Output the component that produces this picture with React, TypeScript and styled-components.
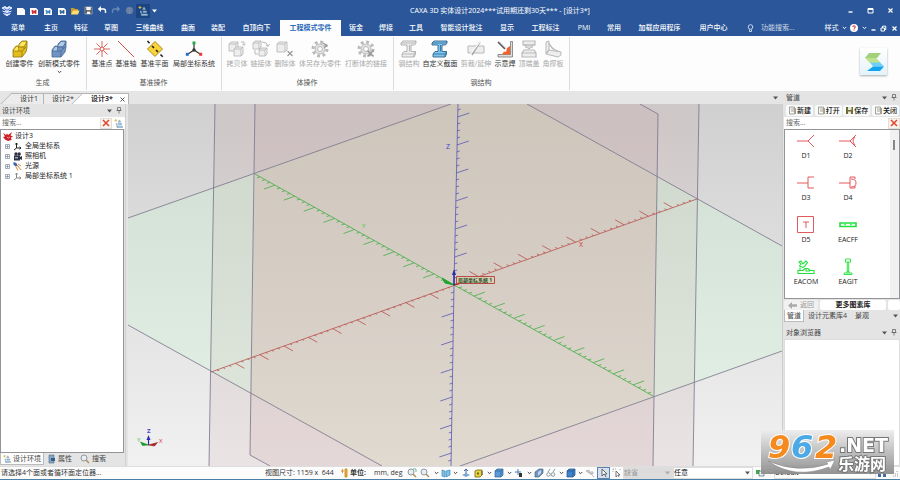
import React from "react";
import styled, { createGlobalStyle, css } from "styled-components";

const Global = createGlobalStyle`
  * { box-sizing: border-box; }
  body {
    margin: 0;
    font-family: "Open Sans", "Noto Sans CJK SC", sans-serif;
    font-size: 7px;
    line-height: 10px;
    color: #333;
    background: #e4e4e4;
  }
  button, input, select {
    font: inherit;
    color: inherit;
    margin: 0;
    padding: 0;
    border: 0;
    background: none;
    border-radius: 0;
    outline: 0;
  }
  svg { display: block; flex: none; }
  h1, h2, p { margin: 0; font-size: inherit; font-weight: inherit; }
`;

const Shell = styled.div`
  display: flex;
  flex-direction: column;
  min-height: 100vh;
  border-bottom: 1px solid #4c7fa6;
  white-space: nowrap;
  overflow: hidden;
`;

/* ---------- title bar and menu ---------- */
const Header = styled.header`
  background: #2b579a;
  color: #fff;
`;
const TitleBar = styled.div`
  display: flex;
  align-items: center;
  height: 20px;
`;
const QuickAccess = styled.div`
  display: flex;
  align-items: center;
  width: 160px;
  padding-top: 1px;
`;
const QuickList = styled.div`
  display: grid;
  grid-template-columns: repeat(10, 1fr);
  width: 136px;
`;
const QuickButton = styled.button<{ $on?: boolean }>`
  display: grid;
  place-items: center;
  height: 14px;
  ${(p) => p.$on && css`background: #1b4480;`}
`;
const BareButton = styled.button<{ $w?: number }>`
  display: grid;
  place-items: center;
  width: ${(p) => p.$w ?? 10}px;
  height: 12px;
`;
const Title = styled.h1`
  flex: 1;
  padding-top: 1px;
  font-family: "Noto Sans", "Noto Sans CJK SC", sans-serif;
  text-align: center;
`;
const MenuBar = styled.nav`
  display: flex;
  align-items: center;
  height: 16px;
`;
const MenuItem = styled.button<{ $w: number; $active?: boolean }>`
  width: ${(p) => p.$w}px;
  height: 16px;
  padding-bottom: 1px;
  font-weight: 500;
  ${(p) => p.$active && css`
    background: #fdfdfd;
    color: #2b69b8;
    font-weight: 700;
  `}
`;
const FunctionSearch = styled.label`
  display: flex;
  align-items: center;
  gap: 7px;
  flex: 1;
  padding-left: 10px;
`;
const SearchInput = styled.input`
  flex: 1;
  min-width: 0;
  width: 40px;
  height: 10px;
  &::placeholder { color: inherit; opacity: 0.75; }
`;

/* ---------- ribbon ---------- */
const Ribbon = styled.section`
  display: flex;
  height: 55px;
  background: #fdfdfd;
`;
const Group = styled.section`
  display: flex;
  flex-direction: column;
  justify-content: space-between;
  margin: 1px 0;
  padding: 0 4px 2px 3px;
  border-right: 1px solid #dcdcdc;
`;
const GroupButtons = styled.div`
  display: flex;
`;
const GroupTitle = styled.h2`
  text-align: center;
  color: #555;
`;
const Tool = styled.button<{ $w: number; $off?: boolean }>`
  display: flex;
  flex-direction: column;
  align-items: center;
  justify-content: flex-start;
  gap: 1px;
  width: ${(p) => p.$w}px;
  padding-top: 3px;
  color: ${(p) => (p.$off ? "#a8a8a8" : "#333")};
  white-space: nowrap;
`;
const Brand = styled.div`
  display: grid;
  place-items: center;
  width: 27px;
  height: 27px;
  margin: 12px 13px 0 auto;
  background: linear-gradient(#fff, #e3f3fa);
  box-shadow: 0 1px 2px #aaa;
`;

/* ---------- work area ---------- */
const Work = styled.div`
  display: grid;
  grid-template-columns: 1fr 117px;
  flex: 1;
`;
const Center = styled.div`
  display: flex;
  flex-direction: column;
`;
const DocTabs = styled.div`
  display: flex;
  align-items: flex-end;
  height: 13px;
  padding: 0 4px 0 12px;
  background: #e5e5e5;
`;
const DocTab = styled.button<{ $w: number; $active?: boolean; $slant?: boolean }>`
  position: relative;
  width: ${(p) => p.$w}px;
  height: 11px;
  padding-left: 8px;
  text-align: left;
  border-top: 1px solid #b5b5b5;
  border-right: 1px solid #b5b5b5;
  background: ${(p) => (p.$active ? "#fff" : "#ececec")};
  font-weight: ${(p) => (p.$active ? 700 : 400)};
  ${(p) => p.$slant && css`
    &::before {
      content: "";
      position: absolute;
      top: -1px;
      bottom: 0;
      left: -6px;
      width: 12px;
      border-left: 1px solid #b5b5b5;
      border-top: 1px solid #b5b5b5;
      background: inherit;
      transform: skewX(-45deg);
    }
  `}
`;
const TabText = styled.span`
  position: relative;
  display: flex;
  align-items: center;
  justify-content: space-between;
  padding-right: 3px;
`;
const Push = styled.span`
  flex: 1;
`;
const Body = styled.div`
  display: flex;
  flex: 1;
`;
const SidePanel = styled.aside`
  display: flex;
  flex-direction: column;
  width: 125px;
`;
const PanelHead = styled.div<{ $gap?: boolean }>`
  display: flex;
  align-items: center;
  height: 13px;
  margin-top: ${(p) => (p.$gap ? 3 : 0)}px;
  padding: 0 1px 0 2px;
  color: #444;
`;
const PanelTitle = styled.h2`
  flex: 1;
`;
const SearchRow = styled.label`
  display: flex;
  align-items: center;
  height: 12px;
  padding-left: 2px;
  background: #fff;
`;
const ClearButton = styled.button`
  display: grid;
  place-items: center;
  width: 12px;
  height: 11px;
  border: 1px solid #e3ded8;
  background: #fbf3ee;
`;
const TreeBox = styled.div`
  flex: 1;
  margin-right: 1px;
  padding: 1px 0 0 2px;
  border: 1px solid #929497;
  background: #fff;
`;
const TreeRow = styled.div<{ $root?: boolean }>`
  display: flex;
  align-items: center;
  gap: ${(p) => (p.$root ? 2 : 3)}px;
  height: 10px;
  padding-left: ${(p) => (p.$root ? 0 : 2)}px;
  color: #222;
`;
const Expander = styled.button`
  display: grid;
  place-items: center;
  width: 5px;
  height: 10px;
`;
const PanelTabs = styled.div`
  display: flex;
  height: 13px;
`;
const PanelTab = styled.button<{ $active?: boolean }>`
  display: flex;
  align-items: center;
  gap: 2px;
  height: 12px;
  padding: 0 4px;
  color: #444;
  ${(p) => p.$active && css`
    padding: 0 2px;
    background: #fdfdfd;
    border: 1px solid #bbb;
    border-top: 0;
  `}
`;
const Splitter = styled.div`
  width: 3px;
  background: #e4e4e4;
  border-left: 1px solid #cfcfcf;
`;
const Viewport = styled.div`
  flex: 1;
  min-width: 0;
  position: relative;
  border-right: 1px solid #ccc;
  background: linear-gradient(#d0d0d0, #f1f1f1);
`;
const Scene = styled.svg`
  position: absolute;
  inset: 0;
  width: 100%;
  height: 100%;
`;

/* ---------- right panel ---------- */
const RightPanel = styled.aside`
  display: flex;
  flex-direction: column;
  padding-left: 1px;
  background: #e4e4e4;
`;
const ActionRow = styled.div`
  display: flex;
  justify-content: space-between;
  height: 13px;
  padding: 1px 1px 1px 2px;
`;
const Action = styled.button`
  display: flex;
  align-items: center;
  justify-content: center;
  width: 27px;
  background: #fafafa;
  border-radius: 2px;
  color: #111;
  font-weight: 500;
`;
const Library = styled.div`
  display: flex;
  height: 170px;
  border: 1px solid #929497;
  background: #fff;
`;
const LibraryGrid = styled.div`
  display: grid;
  grid-template-columns: 42px 42px;
  grid-auto-rows: 42px;
  flex: 1;
`;
const Part = styled.button`
  display: flex;
  flex-direction: column;
  align-items: center;
  padding-top: 1px;
  color: #222;
`;
const ScrollTrack = styled.div`
  width: 9px;
  padding: 10px 0 0 3px;
  background: #f1f1f1;
`;
const ScrollThumb = styled.div`
  width: 2px;
  height: 10px;
  background: #888;
`;
const BackRow = styled.div`
  display: grid;
  grid-template-columns: 34px 1fr 12px;
  gap: 2px;
  height: 11px;
  padding-top: 1px;
`;
const FlatButton = styled.button<{ $off?: boolean }>`
  display: flex;
  align-items: center;
  justify-content: center;
  gap: 3px;
  background: ${(p) => (p.$off ? "#f1f1f1" : "#fff")};
  color: ${(p) => (p.$off ? "#999" : "#222")};
  font-weight: ${(p) => (p.$off ? 400 : 700)};
  border-radius: 2px;
`;
const Browser = styled.div`
  flex: 1;
  border: 1px solid #ddd;
  background: #fff;
`;

/* ---------- status bar ---------- */
const StatusBar = styled.footer`
  display: flex;
  align-items: center;
  height: 13px;
  background: #fcfcfc;
  border-top: 1px solid #ddd;
`;
const StatusText = styled.span<{ $w?: number; $strong?: boolean }>`
  ${(p) => (p.$w ? css`width: ${p.$w}px;` : css`flex: 1; padding-left: 1px;`)}
  font-weight: ${(p) => (p.$strong ? 700 : 400)};
`;
const StatusButton = styled.button<{ $w: number; $on?: boolean }>`
  display: grid;
  place-items: center;
  width: ${(p) => p.$w}px;
  height: 12px;
  ${(p) => p.$on && css`
    background: #d6e0ee;
    border: 1px solid #5b7fae;
  `}
`;
const SelectWrap = styled.label<{ $w: number; $off?: boolean }>`
  display: flex;
  align-items: center;
  width: ${(p) => p.$w}px;
  height: 12px;
  padding-right: 2px;
  background: ${(p) => (p.$off ? "#dcdcdc" : "#fff")};
  color: ${(p) => (p.$off ? "#999" : "#111")};
  border: 1px solid #ddd;
`;
const Select = styled.select`
  flex: 1;
  min-width: 0;
  height: 10px;
  appearance: none;
  opacity: 1;
`;

/* ---------- overlay badge ---------- */
const Watermark = styled.div`
  position: fixed;
  right: 6px;
  bottom: 6px;
  width: 133px;
  height: 44px;
  background: linear-gradient(rgba(236, 236, 236, 0.9), rgba(140, 140, 140, 0.95));
`;
const BadgeArt = styled.svg`
  overflow: visible;
`;

/* ---------- drawings ---------- */
const Chevron = ({ c = "#444" }: { c?: string }) => (
  <svg width="5" height="4" viewBox="0 0 5 4"><path d="M.8 1l1.700 1.700L4.200 1" fill="none" stroke={c} /></svg>
);
const Caret = ({ c = "#555" }: { c?: string }) => (
  <svg width="5" height="4" viewBox="0 0 5 4"><path d="M0 .5h5L2.500 3.500z" fill={c} /></svg>
);
const Pin = () => (
  <svg width="6" height="7" viewBox="0 0 6 7"><path d="M1.500.5h3v3h-3zM.5 3.500h5M3 3.500v3" fill="none" stroke="#666" strokeWidth=".8" /></svg>
);
const RedX = () => (
  <svg width="8" height="8" viewBox="0 0 8 8"><path d="M1 1l6 6M7 1L1 7" stroke="#e0452b" strokeWidth="1.500" /></svg>
);
const WinIcon = ({ k }: { k: "min" | "max" | "close" | "restore" }) => (
  <svg width="7" height="7" viewBox="0 0 7 7" fill="none" stroke="#fff">
    {k === "min" && <path d="M1.500 5h4" strokeWidth="1.400" />}
    {k === "max" && <path d="M1 1.500h5v4.500H1zM1 2.500h5" />}
    {k === "close" && <path d="M1.500 1.500l4 4m0-4l-4 4" strokeWidth="1.200" />}
    {k === "restore" && <path d="M1 3h3.500v3H1zM2.500 3V1.200h3.300v3.300H4.500" />}
  </svg>
);
const Sheet = ({ c }: { c?: string }) => (
  <svg width="10" height="10" viewBox="0 0 10 10">
    <path d="M1 2h6l2 2v5H1z" fill="#fff" />
    {c && <path d="M3 4l2 1.500L7 4v3.500L5 6.500 3.500 8z" fill={c} stroke={c} strokeWidth=".8" />}
  </svg>
);
const DocTree = ({ s = 10 }: { s?: number }) => (
  <svg width={s} height={s} viewBox="0 0 10 10">
    <path d="M2 0v3M.5 1.500h3" stroke="#e9b33f" strokeWidth="1" />
    <path d="M6 1l1.500 2.500h-3zM5 5h3.500v1.500H5zM3.500 8h6v1.500h-6zM2 5h1.500v4.500" fill="#a9cbe0" stroke="#7299b4" strokeWidth=".6" />
  </svg>
);
const quickIcons: [string, React.ReactNode][] = [
  ["新建", <Sheet />],
  ["新建设计", <Sheet c="#d3222a" />],
  ["新建图纸", <Sheet c="#3c87c4" />],
  ["新建模板", <Sheet c="#2a6590" />],
  ["打开", <svg width="10" height="10" viewBox="0 0 10 10"><path d="M1 8.500V2h3l1 1h3v2" fill="#c89b2d" /><path d="M1 8.500L3 4.500h6.500L8 8.500z" fill="#ffdd6e" /></svg>],
  ["保存", <svg width="9" height="9" viewBox="0 0 9 9"><path d="M1 1h7v7H1z" fill="#3f4042" stroke="#c9c9c9" strokeWidth=".6" /><path d="M2.200 1h4.600v3.200H2.200zM2.800 5.500h3.500V8H2.800z" fill="#f3f3f3" /></svg>],
  ["撤销", <svg width="10" height="9" viewBox="0 0 10 9"><path d="M4 0L.8 3 4 6z" fill="#fff" /><path d="M3 3h3.500q2 0 2 2.200V7" fill="none" stroke="#fff" strokeWidth="1.500" /></svg>],
  ["重做", <svg width="10" height="9" viewBox="0 0 10 9"><path d="M6 0l3.200 3L6 6z" fill="#6688b8" /><path d="M7 3H3.500q-2 0-2 2.200V7" fill="none" stroke="#6688b8" strokeWidth="1.300" /></svg>],
  ["网络", <svg width="9" height="9" viewBox="0 0 9 9"><circle cx="4.500" cy="4.500" r="3.700" fill="#60789f" /><path d="M1 4.500h7M4.500 1v7M2 2.500h5M2 6.500h5" stroke="#8596b0" strokeWidth=".5" /></svg>],
  ["设计树", <DocTree />],
];
const AppMark = () => (
  <svg width="12" height="12" viewBox="0 0 12 12">
    <path d="M1 3l3-1.500L6 3l2-1.500L11 3 6 6zM1.500 6L6 8.500 10.500 6M2.500 8.500L6 10.700l3.500-2.200" fill="#d6e5fb" stroke="#e9f1ff" strokeWidth="1" />
    <path d="M3 3.500l3 1.700 3-1.700M3 7l3 1.700L9 7" fill="none" stroke="#5479dc" />
  </svg>
);

const gray = "#b9b9b9";
const Svg20 = ({ children }: { children: React.ReactNode }) => (
  <svg width="18" height="18" viewBox="0 0 18 18" fill="none">{children}</svg>
);
const Block = ({ a, b, d }: { a: string; b: string; d: string }) => (
  <Svg20>
    <path d="M2 10l3-4h3V4l3-3h5v6l-1 5-4 5H2z" fill={a} stroke={d} strokeWidth=".8" />
    <path d="M2 11h9l4-4M7 7h6l3-5M11 11v6M7 7v4M13 7v2" stroke={d} strokeWidth=".7" />
    <path d="M3 10.500L5.500 7H7v3.500zM8 6l3-4h4l-2 4z" fill={b} />
  </Svg20>
);
const Cube = ({ x, y, s = 7 }: { x: number; y: number; s?: number }) => (
  <g transform={`translate(${x} ${y})`} stroke={gray} strokeWidth=".9" fill="#eee">
    <path d={`M0 2h${s}v${s}h-${s}zM0 2l2-2h${s}l-2 2M${s} ${s + 2}l2-2V0`} />
  </g>
);
const Gear = ({ children }: { children?: React.ReactNode }) => (
  <Svg20>
    <circle cx="9" cy="9" r="7" stroke={gray} strokeWidth="3" strokeDasharray="2.750 2.750" />
    <circle cx="9" cy="9" r="5" fill="#e4e4e4" stroke={gray} />
    <circle cx="9" cy="9" r="2.500" fill="#fdfdfd" stroke={gray} />
    {children}
  </Svg20>
);
const Beam = ({ f, s }: { f: string; s: string }) => (
  <Svg20>
    <path d="M1 3l2-2h13v2l-1.500 2H11v6.500h4.500V14L14 17H2v-3l2-2.500h3V5H1z" fill={f} stroke={s} strokeWidth=".9" />
    <path d="M1 3h13.500L16 1M2 14h12l1.500-2.500M14 14v3M9.500 5v6.500" stroke={s} strokeWidth=".8" />
  </Svg20>
);

type ToolDef = [string, number, React.ReactNode, boolean?];
const groups: { title: string; tools: ToolDef[] }[] = [
  {
    title: "生成",
    tools: [
      ["创建零件", 33, <Block a="#e3bd1c" b="#ffe866" d="#8b7416" />],
      ["创新模式零件", 46, <Block a="#6f93c4" b="#b3cdec" d="#49658d" />],
    ],
  },
  {
    title: "基准操作",
    tools: [
      ["基准点", 24, <Svg20><path d="M9 1v16M1 9h16M3.500 3.500l11 11m0-11l-11 11" stroke="#d8544c" strokeWidth=".9" /><circle cx="9" cy="9" r="2" stroke="#d8544c" fill="#fff" /></Svg20>],
      ["基准轴", 24, <Svg20><path d="M1 1l16 16" stroke="#d8544c" strokeWidth="1" /></Svg20>],
      ["基准平面", 33, <Svg20><path d="M9 1.500L16.500 9 9 16.500 1.500 9z" fill="#fbd337" stroke="#a78b26" /><path d="M1.500 1l2 2.200M6 6l2 2m2 2l2 2M14.500 14.500l2.200 2.200" stroke="#222" strokeWidth="1.600" /></Svg20>],
      ["局部坐标系统", 46, <Svg20><path d="M9 10V4M9 10l-6 4M9 10l6 4" stroke="#333" strokeWidth="1.200" /><path d="M7.500 1.500h3v3h-3z" fill="#25a846" /><circle cx="9" cy="10" r="1.700" fill="#333" /><path d="M.8 12.800h3v3h-3z" fill="#2a6fd0" /><path d="M14.200 12.800h3v3h-3z" fill="#e23c34" /></Svg20>],
    ],
  },
  {
    title: "体操作",
    tools: [
      ["拷贝体", 24, <Svg20><Cube x={1} y={2} /><Cube x={6} y={7} /><path d="M13 2h3v3m-1.500-1.200L16 5.500l1.500-1.700" stroke={gray} /></Svg20>, true],
      ["链接体", 24, <Svg20><Cube x={1} y={1} s={6} /><Cube x={7} y={8} s={6} /><path d="M3 10v4h3M10 2q5 0 6 4M14 5l2 1.500L17.500 4" stroke={gray} /></Svg20>, true],
      ["删除体", 24, <Svg20><Cube x={1} y={2} s={8} /><path d="M11.500 11l5 5m0-5l-5 5" stroke="#999" strokeWidth="1.300" /></Svg20>, true],
      ["体另存为零件", 46, <Gear><path d="M12 3l4 3-3 1.500" stroke="#999" strokeWidth="1.300" /></Gear>, true],
      ["打断体的链接", 46, <Gear><path d="M10.500 10.500l6 6m0-6l-6 6" stroke="#999" strokeWidth="1.700" /></Gear>, true],
    ],
  },
  {
    title: "钢结构",
    tools: [
      ["钢结构", 24, <Beam f="#eee" s="#aaa" />, true],
      ["自定义截面", 38, <Beam f="#7cc6f2" s="#33658d" />],
      ["剪裁/延伸", 34, <Svg20><path d="M1 6h16v7H1z" fill="#eee" stroke={gray} /><path d="M5 15L13 2" stroke="#aaa" strokeWidth="1.500" /><path d="M2 16l11-14" stroke="#fff" /></Svg20>, true],
      ["示意焊", 24, <Svg20><path d="M14.500 1.500h2v15.500H2v-2.500h12.500z" fill="#ddd" stroke="#777" strokeWidth=".8" /><path d="M14 6v8.500H6l2-3 2 .5 1-4z" fill="#f0622d" /><path d="M2 2l7 7" stroke="#555" strokeWidth="1.600" /><path d="M3 1.500l6.500 6.500" stroke="#aac" strokeWidth=".7" /></Svg20>],
      ["顶端盖", 24, <Svg20><path d="M3 1h12v4H3zM5 7h8M4 10h10l2 3v4H2v-4z" fill="#eee" stroke={gray} strokeWidth="1.200" /><path d="M4 5h10l-5 4zM2 13h14" stroke={gray} /></Svg20>, true],
      ["角撑板", 24, <Svg20><path d="M2 2l3-1v9l12 2v3l-3 2L2 14z" fill="#eee" stroke={gray} /><path d="M5 3q2 6 9 8M5 10l-3 4" stroke={gray} strokeWidth="1.300" /></Svg20>, true],
    ],
  },
];

const menus: [string, number][] = [
  ["菜单", 36], ["主页", 30], ["特征", 30], ["草图", 30], ["三维曲线", 47], ["曲面", 30], ["装配", 30], ["自顶向下", 47],
  ["工程模式零件", 61], ["钣金", 30], ["焊接", 30], ["工具", 30], ["智能设计批注", 61], ["显示", 30], ["工程标注", 47],
  ["PMI", 30], ["常用", 30], ["加载应用程序", 61], ["用户中心", 47],
];

const AxesIcon = ({ c }: { c: string }) => (
  <svg width="9" height="9" viewBox="0 0 9 9"><path d="M3.500 1v5L1 8M3.500 6H8M2.300 2.500L3.500 1l1.200 1.500M6.500 4.800L8 6 6.500 7.200" fill="none" stroke={c} /></svg>
);
const tree: [string, React.ReactNode][] = [
  ["全局坐标系", <AxesIcon c="#222" />],
  ["照相机", <svg width="9" height="9" viewBox="0 0 9 9"><circle cx="3" cy="2" r="1.700" fill="#334" /><circle cx="6.200" cy="2" r="1.700" fill="#334" /><path d="M1 3.500h6V8.500H1zM7 5l2-1v4L7 7z" fill="#2d3342" /><path d="M2 5h3v1.500H2z" fill="#9ab" /></svg>],
  ["光源", <svg width="9" height="9" viewBox="0 0 9 9"><path d="M.5 0l3 1 1 3-2 .5-2-2z" fill="#3e62a8" /><path d="M4 3l4 5M3 5l2 3.500M5 2l3 2" stroke="#d98a3a" /></svg>],
  ["局部坐标系统 1", <AxesIcon c="#888" />],
];
const Splash = () => (
  <svg width="10" height="9" viewBox="0 0 10 9"><path d="M0 1l3 2 1-1.500L5 3l4-3-1.500 3.500L10 4.500 8 5.500 8.500 8 5 9 2 7.500 0 5l2-.5z" fill="#cf1f25" /><path d="M4 5l1.500 1L7 5" stroke="#fff" strokeWidth=".6" fill="none" /></svg>
);

const red = "#e0464a";
const green = "#21e03a";
const parts: [string, React.ReactNode][] = [
  ["D1", <path d="M0 10h11M17 4l-6 6 6 6" stroke={red} />],
  ["D2", <><path d="M0 10h11M17 4l-6 6 6 6" stroke={red} /><path d="M16 6q-4 4 0 8" stroke={red} /></>],
  ["D3", <path d="M0 10h11M17 4h-6v11h6" stroke={red} />],
  ["D4", <><path d="M0 10h11M16 4h-5v11h5" stroke={red} /><path d="M12 6q5 0 5 4t-5 4M16 4v2M16 13v2" stroke={red} /></>],
  ["D5", <><path d="M.5 1.500h16v16H.5z" stroke={red} /><path d="M6 7h6M9 7v6" stroke={red} /></>],
  ["EACFF", <><path d="M1 8h16v3.500H1z" stroke={green} strokeWidth="1.600" /><path d="M5 9.700h2m4 0h2" stroke={green} /></>],
  ["EACOM", <><path d="M1 16.500h16v-3h-4l-2-2H8l-2 2H1zM2 5l2-1 2 3 3-3 1.500 1.500L7.500 9.500 6 10.500 2.500 9l1.500-2zM3 10.500v3M9 12v2h4" stroke={green} strokeWidth="1.100" /></>],
  ["EAGIT", <path d="M6.500 2h5v3h-5zM8.300 5v10M9.700 5v10M5 17.500h8v-1.500h-8zM7 15h4" stroke={green} />],
];

/* ---------- 3D scene ---------- */
type P = [number, number];
const origin: P = [454, 285];
const ticks = (from: P, to: P, n: number, major: P, minor: P) => {
  let d = "";
  for (let i = 1; i < n * 4; i++) {
    const t = i / (n * 4);
    const x = from[0] + (to[0] - from[0]) * t;
    const y = from[1] + (to[1] - from[1]) * t;
    const v = i % 4 === 0 ? major : minor;
    d += `M${x.toFixed(1)} ${y.toFixed(1)}l${v[0]} ${v[1]}`;
  }
  return d;
};
const SceneView = () => (
  <Scene viewBox="128 104 654 362" preserveAspectRatio="xMidYMid slice" fill="none">
    <defs>
      <linearGradient id="beige" x1="0" y1="0" x2="0" y2="1">
        <stop offset="0" stopColor="#cec6bb" />
        <stop offset=".5" stopColor="#d6cdc5" />
        <stop offset="1" stopColor="#e0dad0" />
      </linearGradient>
    </defs>
    <path d="M215 104H699L693 466H209z" fill="#c38c8c" fillOpacity=".13" />
    <path d="M255 104H640L658 114L653 466H270L250 455z" fill="#c38c8c" fillOpacity=".13" />
    <path d="M128 218L451 104H527L782 246V351L460 466H382L128 325z" fill="#ccf8d4" fillOpacity=".3" />
    <path d="M255 174L451 104H527L657 177L653 396L460 466H382L251 394z" fill="url(#beige)" />
    <g stroke="#77728a" strokeWidth=".8">
      <path d="M128 218L451 104M527 104L782 246M128 325L382 466M460 466L782 351" />
      <path d="M215 104L209 466M699 104L693 466M255 104L250 455L270 466M640 104L658 114L653 466" />
    </g>
    <g strokeWidth=".8">
      <path d={"M211 372L697 199" + ticks(origin, [697, 199], 10, [-9, -5], [-2, -1]) + ticks(origin, [211, 372], 10, [9, 5], [2, 1])} stroke="#b8504c" />
      <path d={"M255 174L454 285L653 396" + ticks(origin, [255, 174], 10, [-11, 4], [-3, 1]) + ticks(origin, [653, 396], 10, [11, -4], [3, -1])} stroke="#45ad45" />
      <path d={"M458 104L454 285L451 466" + ticks(origin, [458, 89], 7, [12, -4], [3, -1]) + ticks(origin, [451, 481], 7, [-12, 4], [-3, 1])} stroke="#5858b4" />
    </g>
    <path d="M454 285l-12-7 3 5z" fill="#22a32c" stroke="#22a32c" />
    <path d="M454 285l12-3-3-2z" fill="#c22" stroke="#b22" />
    <path d="M454 285V273" stroke="#2c2ca8" strokeWidth="1.500" />
    <path d="M452 275l2-6 2 6z" fill="#2c2ca8" />
    <path d="M456.500 276.500h38v7h-38z" fill="#d9cfb4" stroke="#b94a44" />
    <text x="458" y="282" fontSize="5" fill="#1f4d1f" fontWeight="700">局部坐标系统 1</text>
    <text x="446" y="149" fontSize="7" fill="#4343c8">Z</text>
    <text x="579" y="247" fontSize="7" fill="#d8302c">X</text>
    <text x="362" y="228" fontSize="6" fill="#36c936">Y</text>
    <path d="M148.500 445v-6" stroke="#2c2cb0" strokeWidth="1.200" />
    <path d="M146.500 440l2-5 2 5z" fill="#2c2cb0" />
    <path d="M148.500 445l-8-3 2 3.500z" fill="#1b962a" stroke="#1b962a" strokeWidth=".6" />
    <path d="M148.500 445l9-2.500-3 3.500z" fill="#a32020" stroke="#a32020" strokeWidth=".6" />
    <text x="147" y="433" fontSize="6" fill="#4343c8" fontWeight="700">Z</text>
    <text x="137" y="442" fontSize="6" fill="#36c936">Y</text>
    <text x="159" y="443" fontSize="6" fill="#d8302c">X</text>
  </Scene>
);

/* ---------- status icons ---------- */
const S = ({ children }: { children: React.ReactNode }) => (
  <svg width="10" height="10" viewBox="0 0 10 10" fill="none" strokeWidth="1">{children}</svg>
);
const Lens = () => <S><circle cx="4" cy="4" r="3" fill="#e6eef3" stroke="#90989e" /><path d="M6 6l3 3" stroke="#b08d5a" strokeWidth="1.500" /></S>;
const Box = ({ a, b }: { a: string; b: string }) => (
  <S><path d="M1 3l2-2h6v6L7 9H1z" fill={a} stroke={b} strokeWidth=".7" /><path d="M1 3h6v6M7 3l2-2" stroke={b} strokeWidth=".7" /></S>
);
const Pointer = () => <S><path d="M3 1l5 5H5.500L7 9M3 1v7l2-2" fill="#fff" stroke="#555" strokeWidth=".9" /></S>;
const Bars = ({ children }: { children?: React.ReactNode }) => <svg width="8" height="10" viewBox="0 0 8 10" fill="none">{children}</svg>;
type StatusDef = [string, number, React.ReactNode, boolean?];
const statusTools: StatusDef[] = [
  ["缩放", 13, <S><circle cx="4" cy="4" r="3" fill="#e6eef3" stroke="#90989e" /><path d="M6 6l3 3" stroke="#b08d5a" strokeWidth="1.500" /><path d="M6 1h3v3" stroke="#6b9" /></S>],
  ["窗口缩放", 14, <Lens />],
  ["缩放选项", 8, <Chevron />],
  ["视向", 11, <S><path d="M1 2l3 1v6L1 8zM5 3l4-1v5L5 9z" fill="#7fc2ea" stroke="#3b87b8" strokeWidth=".7" /></S>],
  ["视向选项", 8, <Chevron />],
  ["定位", 13, <S><path d="M5 7V1M3 3l2-2 2 2" stroke="#3567a8" /><path d="M1 7l4-2 4 2-4 2z" fill="#79a7d6" /></S>],
  ["渲染", 13, <S><path d="M1 3l2-1h5v5L6 9H1z" fill="#e9d33e" stroke="#6d6312" strokeWidth=".8" /><path d="M3 4.500h2v2H3z" fill="#6d6312" /><path d="M8 3v4" stroke="#555" /></S>],
  ["渲染选项", 8, <Chevron />],
  ["显示", 12, <Box a="#5a9ad5" b="#2f6294" />],
  ["显示选项", 8, <Chevron />],
  ["捕捉", 12, <S><path d="M1 4h6M4 1v6" stroke="#4c7dae" /><path d="M5 5h3v4H5z" fill="#333" /></S>],
  ["捕捉选项", 8, <Chevron />],
  ["剖切", 11, <S><path d="M1 9V4l4-3h4v4L5 9z" fill="#6f94c6" stroke="#456" strokeWidth=".6" /><path d="M4 4l3-2v3L4 8z" fill="#c2d4ea" /></S>],
  ["隐藏", 14, <S><circle cx="2.500" cy="6.500" r="1.800" stroke="#8a98a0" /><circle cx="7" cy="6.500" r="1.800" stroke="#8a98a0" /><path d="M2 4l2-3M7 4l2-3" stroke="#8a98a0" /></S>],
  ["隐藏选项", 6, <Chevron />],
  ["实体", 13, <Box a="#3f83cc" b="#1f4f86" />],
  ["实体选项", 6, <Chevron />],
  ["链接", 14, <S><path d="M1 3l3-1v3zM4 4h4v2H5zM6 6l3 3" fill="#ccc" stroke="#bbb" /></S>],
  ["选择", 13, <Pointer />, true],
  ["框选", 13, <S><path d="M1 1h3M1 1v3M8 1v1" stroke="#aaa" strokeDasharray="1 1" /><path d="M4 3l4 4H6l1 2M4 3v6l1.500-1.500" fill="#fff" stroke="#555" strokeWidth=".8" /></S>],
];

const BigDigits = styled.text`
  font: italic 700 32px "DejaVu Sans", sans-serif;
  stroke: #fff;
  stroke-width: 2px;
  paint-order: stroke;
`;
const BadgeText = styled.text<{ $s: number }>`
  font: 700 ${(p) => p.$s}px "DejaVu Sans", "Noto Sans CJK SC", sans-serif;
  fill: #fff;
  stroke: #777;
  stroke-width: 2px;
  paint-order: stroke;
`;

export default function App() {
  return (
    <Shell>
      <Global />
      <Header>
        <TitleBar>
          <QuickAccess>
            <BareButton $w={14} aria-label="CAXA"><AppMark /></BareButton>
            <QuickList>
              {quickIcons.map(([n, icon], i) => (
                <QuickButton key={n} aria-label={n} $on={i === 9}>{icon}</QuickButton>
              ))}
            </QuickList>
            <BareButton $w={8} aria-label="自定义"><Caret c="#fff" /></BareButton>
          </QuickAccess>
          <Title>CAXA 3D 实体设计2024***试用期还剩30天*** - [设计3*]</Title>
          <BareButton $w={20} aria-label="最小化"><WinIcon k="min" /></BareButton>
          <BareButton $w={20} aria-label="最大化"><WinIcon k="max" /></BareButton>
          <BareButton $w={20} aria-label="关闭"><WinIcon k="close" /></BareButton>
        </TitleBar>
        <MenuBar>
          {menus.map(([n, w]) => (
            <MenuItem key={n} $w={w} $active={n === "工程模式零件"}>{n}</MenuItem>
          ))}
          <FunctionSearch>
            <svg width="7" height="9" viewBox="0 0 7 9" fill="none" stroke="#c6d4ea"><circle cx="3.500" cy="3" r="2.300" /><path d="M2.500 5.500v2h2v-2" /></svg>
            <SearchInput placeholder="功能搜索..." aria-label="功能搜索" />
          </FunctionSearch>
          <BareButton $w={17}>样式</BareButton>
          <BareButton $w={9} aria-label="样式选项"><Chevron c="#fff" /></BareButton>
          <BareButton $w={10} aria-label="帮助">
            <svg width="8" height="8" viewBox="0 0 8 8"><circle cx="4" cy="4" r="4" fill="#fff" /><path d="M2.800 3q0-1.300 1.200-1.300T5.200 3q0 .7-1.200 1.400M4 5.500v1" fill="none" stroke="#d33" strokeWidth="1.100" /></svg>
          </BareButton>
          <BareButton $w={10} aria-label="帮助选项"><Chevron c="#fff" /></BareButton>
          <BareButton $w={9} aria-label="最小化文档"><WinIcon k="min" /></BareButton>
          <BareButton $w={11} aria-label="还原文档"><WinIcon k="restore" /></BareButton>
          <BareButton $w={11} aria-label="关闭文档"><WinIcon k="close" /></BareButton>
        </MenuBar>
      </Header>

      <Ribbon>
        {groups.map((g) => (
          <Group key={g.title}>
            <GroupButtons>
              {g.tools.map(([n, w, icon, off]) => (
                <Tool key={n} $w={w} $off={off} disabled={off}>
                  {icon}
                  {n}
                  {n === "创新模式零件" && <Chevron />}
                </Tool>
              ))}
            </GroupButtons>
            <GroupTitle>{g.title}</GroupTitle>
          </Group>
        ))}
        <Brand>
          <svg width="20" height="20" viewBox="0 0 20 20">
            <path d="M5 1h12l-4 5H1z" fill="#a3d07a" /><path d="M1 6h11l5 5H6z" fill="#bfe08c" />
            <path d="M6 10.500h10l4 4H9z" fill="#6fd0f5" /><path d="M9 14.500h11L16 19H3z" fill="#12a5ee" />
          </svg>
        </Brand>
      </Ribbon>

      <Work>
        <Center>
          <DocTabs>
            <DocTab $w={32} $slant><TabText>设计1</TabText></DocTab>
            <DocTab $w={39}><TabText>设计2*</TabText></DocTab>
            <DocTab $w={46} $slant $active>
              <TabText>设计3*
                <svg width="5" height="5" viewBox="0 0 5 5"><path d="M.5.5l4 4m0-4l-4 4" stroke="#444" strokeWidth=".9" /></svg>
              </TabText>
            </DocTab>
            <Push />
            <BareButton $w={7} aria-label="文档列表"><Caret /></BareButton>
          </DocTabs>
          <Body>
            <SidePanel>
              <PanelHead>
                <PanelTitle>设计环境</PanelTitle>
                <BareButton aria-label="面板菜单"><Caret /></BareButton>
                <BareButton aria-label="固定面板"><Pin /></BareButton>
              </PanelHead>
              <SearchRow>
                <SearchInput placeholder="搜索..." aria-label="搜索设计环境" />
                <ClearButton aria-label="清除"><RedX /></ClearButton>
                <BareButton $w={13} aria-label="筛选"><DocTree s={9} /></BareButton>
              </SearchRow>
              <TreeBox>
                <TreeRow $root><Splash />设计3</TreeRow>
                {tree.map(([n, icon]) => (
                  <TreeRow key={n}>
                    <Expander aria-label={"展开" + n}>
                      <svg width="5" height="5" viewBox="0 0 5 5"><path d="M.5.5h4v4h-4zM1 2.500h3M2.500 1v3" fill="#fff" stroke="#7b86a0" strokeWidth=".7" /></svg>
                    </Expander>
                    {icon}
                    {n}
                  </TreeRow>
                ))}
              </TreeBox>
              <PanelTabs>
                <PanelTab $active><DocTree s={8} />设计环境</PanelTab>
                <PanelTab>
                  <Bars><path d="M1 1h5v8H1z" fill="#7fa8cc" stroke="#567" strokeWidth=".6" /><path d="M3 4h4v3H3z" fill="#345d88" /></Bars>属性
                </PanelTab>
                <PanelTab><Lens />搜索</PanelTab>
              </PanelTabs>
            </SidePanel>
            <Splitter />
            <Viewport><SceneView /></Viewport>
          </Body>
        </Center>

        <RightPanel>
          <PanelHead>
            <PanelTitle>管道</PanelTitle>
            <BareButton aria-label="管道菜单"><Caret /></BareButton>
            <BareButton aria-label="固定管道"><Pin /></BareButton>
          </PanelHead>
          <ActionRow>
            {["新建", "打开", "保存", "关闭"].map((n) => (
              <Action key={n}>
                <svg width="9" height="9" viewBox="0 0 9 9" fill="none">
                  {n === "保存"
                    ? <><path d="M1 1h7v7H1z" fill="#6b6b35" /><path d="M3 1h3.500v3H3zM3 5.500h3V8H3z" fill="#e8e8d8" /></>
                    : <path d="M1.500 1h5v7h-5zM3 3h3M3 5h3M7.500 2v6" stroke="#8c8c7e" strokeWidth=".8" />}
                </svg>
                {n}
              </Action>
            ))}
          </ActionRow>
          <SearchRow>
            <SearchInput placeholder="搜索..." aria-label="搜索管道" />
            <ClearButton aria-label="清除管道搜索"><RedX /></ClearButton>
          </SearchRow>
          <Library>
            <LibraryGrid>
              {parts.map(([n, art]) => (
                <Part key={n}>
                  <svg width="18" height="20" viewBox="0 0 18 20" fill="none" strokeWidth=".9">{art}</svg>
                  {n}
                </Part>
              ))}
            </LibraryGrid>
            <ScrollTrack><ScrollThumb /></ScrollTrack>
          </Library>
          <BackRow>
            <FlatButton $off>
              <svg width="9" height="7" viewBox="0 0 9 7"><path d="M0 3.500L4 0v2.300h5v2.400H4V7z" fill="#aaa" /></svg>返回
            </FlatButton>
            <FlatButton>更多图素库</FlatButton>
            <FlatButton aria-label="更多" />
          </BackRow>
          <PanelTabs>
            <PanelTab $active>管道</PanelTab>
            <PanelTab>设计元素库4</PanelTab>
            <PanelTab>景观</PanelTab>
            <Push />
            <BareButton aria-label="标签列表"><Caret /></BareButton>
          </PanelTabs>
          <PanelHead $gap>
            <PanelTitle>对象浏览器</PanelTitle>
            <BareButton aria-label="浏览器菜单"><Caret /></BareButton>
            <BareButton aria-label="固定浏览器"><Pin /></BareButton>
          </PanelHead>
          <Browser />
        </RightPanel>
      </Work>

      <StatusBar>
        <StatusText>请选择4个面或者循环面定位器...</StatusText>
        <StatusText $w={75}>视图尺寸: 1159 x&nbsp; 644</StatusText>
        <StatusText $w={10}>
          <Bars><path d="M5 1h2v8H5zM1 3h3M2.500 1v4" fill="#e9a93a" stroke="#d08f26" strokeWidth=".9" /></Bars>
        </StatusText>
        <StatusText $w={24} $strong>单位:</StatusText>
        <StatusText $w={31}>mm, deg</StatusText>
        {statusTools.map(([n, w, icon, on]) => (
          <StatusButton key={n} $w={w} $on={on} aria-label={n}>{icon}</StatusButton>
        ))}
        <SelectWrap $w={50} $off>
          <Select disabled aria-label="选择过滤"><option>缺省</option></Select><Caret c="#aaa" />
        </SelectWrap>
        <SelectWrap $w={80}>
          <Select aria-label="拾取类型"><option>任意</option></Select><Caret />
        </SelectWrap>
        <StatusButton $w={13} aria-label="配置"><S><path d="M1 2h4v4H1z" fill="#3bab45" /><path d="M4 3h5v5H4z" fill="#e9efe9" stroke="#567" strokeWidth=".7" /></S></StatusButton>
        <StatusButton $w={8} aria-label="配置选项"><Chevron /></StatusButton>
        <SelectWrap $w={102}>
          <Select aria-label="配置名称"><option>Default</option></Select><Caret />
        </SelectWrap>
        <StatusButton $w={12} aria-label="结构"><S><path d="M4 1h3v3H4z" fill="#c33" /><path d="M1 6h3v3H1zM6 6h3v3H6z" fill="#46a" /></S></StatusButton>
        <StatusButton $w={12} aria-label="缩放窗口"><S><path d="M8 3v1M6 6h1M8 6h1M4 8h1M6 8h1M8 8h1" stroke="#999" /></S></StatusButton>
      </StatusBar>

      <Watermark>
        <BadgeArt width="133" height="44" viewBox="0 0 133 44" fill="none" aria-label="962.NET 乐游网">
          <BigDigits x="7" y="28" fill="#f58a1f">9</BigDigits>
          <BigDigits x="30" y="28" fill="#4ba9e6">6</BigDigits>
          <BigDigits x="54" y="28" fill="#f58a1f">2</BigDigits>
          <path d="M7 31q30 13 60 3l-2-2 9-2-5 10-1-3q-34 13-61-6z" fill="#fff" stroke="#888" strokeWidth=".6" />
          <BadgeText $s={19} x="78" y="22">.NET</BadgeText>
          <BadgeText $s={16} x="77" y="40">乐游网</BadgeText>
        </BadgeArt>
      </Watermark>
    </Shell>
  );
}
